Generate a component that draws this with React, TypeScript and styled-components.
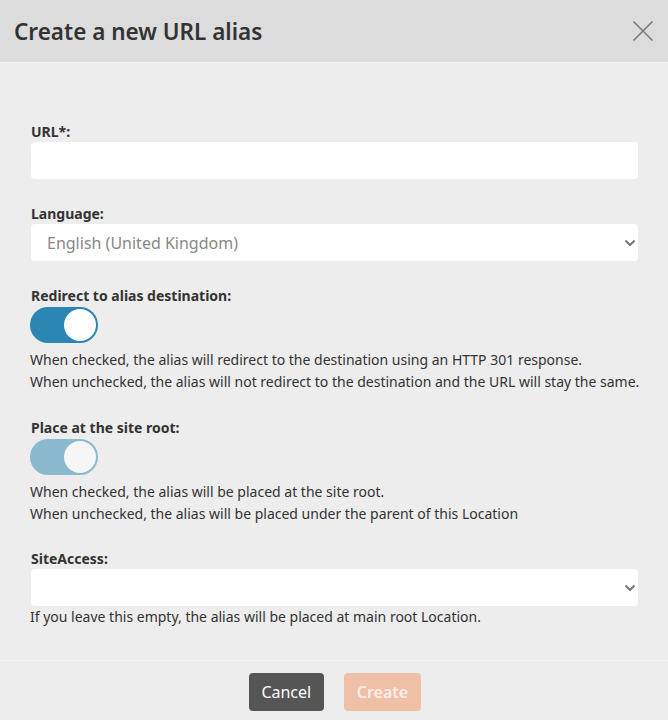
import React from 'react'
import styled, { createGlobalStyle } from 'styled-components'

const GlobalStyle = createGlobalStyle`
  html, body {
    margin: 0;
    padding: 0;
    background: #ededed;
  }
  body {
    font-family: 'Noto Sans', 'Open Sans', sans-serif;
    color: #333;
  }
`

const Modal = styled.div`
  width: 668px;
  height: 720px;
  display: flex;
  flex-direction: column;
  background: #ededed;
  overflow: hidden;
`

const Header = styled.div`
  height: 62px;
  flex-shrink: 0;
  display: flex;
  align-items: center;
  justify-content: space-between;
  padding: 0 14px;
  background: #dcdcdc;
  border-bottom: 1px solid #f2f2f2;
`

const Title = styled.h3`
  margin: 0;
  font-size: 22.5px;
  font-weight: 600;
  color: #333;
`

const CloseButton = styled.button`
  border: 0;
  background: none;
  padding: 0;
  width: 22px;
  height: 22px;
  display: flex;
  align-items: center;
  justify-content: center;
  cursor: pointer;
`

const Body = styled.div`
  flex: 1;
  padding: 59px 30px 0 30px;
`

const FieldGroup = styled.div<{ spacing?: number }>`
  margin-bottom: ${({ spacing }) => spacing ?? 25}px;
`

const Label = styled.label`
  display: block;
  font-size: 14px;
  line-height: 20px;
  font-weight: 700;
  color: #333;
  padding-left: 1px;
`

const TextInput = styled.input`
  box-sizing: border-box;
  display: block;
  width: 607px;
  height: 37px;
  margin-left: 1px;
  border: 0;
  border-radius: 4px;
  background: #fff;
  font-family: inherit;
  font-size: 16px;
  padding: 0 16px;
  outline: none;
`

const SelectWrap = styled.div`
  position: relative;
  width: 607px;
  margin-left: 1px;
`

const Select = styled.select`
  box-sizing: border-box;
  display: block;
  width: 100%;
  height: 37px;
  border: 0;
  border-radius: 4px;
  background: #fff;
  font-family: inherit;
  font-size: 16px;
  color: #888;
  padding: 0 30px 0 16px;
  appearance: none;
  outline: none;
`

const Chevron = styled.svg`
  position: absolute;
  right: 2px;
  top: 15px;
  pointer-events: none;
`

const Toggle = styled.div<{ on: boolean; disabled?: boolean }>`
  box-sizing: border-box;
  width: 68px;
  height: 36px;
  margin-top: 1px;
  border-radius: 18px;
  background: #2b86b3;
  padding: 2px;
  display: flex;
  justify-content: ${({ on }) => (on ? 'flex-end' : 'flex-start')};
  opacity: ${({ disabled }) => (disabled ? 0.5 : 1)};
`

const Knob = styled.span`
  width: 32px;
  height: 32px;
  border-radius: 50%;
  background: #fff;
`

const Help = styled.p`
  margin: 6px 0 0 0;
  font-size: 14px;
  line-height: 22px;
  color: #333;
  white-space: nowrap;
`

const HelpTight = styled(Help)`
  margin-top: 0;
`

const Footer = styled.div`
  height: 60px;
  flex-shrink: 0;
  border-top: 1px solid #f5f5f5;
  display: flex;
  justify-content: center;
  align-items: flex-start;
  gap: 20px;
  padding-top: 12px;
  padding-left: 2px;
  box-sizing: border-box;
`

const Button = styled.button<{ variant: 'secondary' | 'primary' }>`
  height: 38px;
  border: 0;
  border-radius: 4px;
  padding: 0 ${({ variant }) => (variant === 'primary' ? 13 : 12.5)}px;
  font-family: inherit;
  font-size: 16px;
  font-weight: ${({ variant }) => (variant === 'primary' ? 600 : 400)};
  background: ${({ variant }) => (variant === 'primary' ? '#f0bfa8' : '#555555')};
  color: ${({ variant }) => (variant === 'primary' ? '#fcefe9' : '#ffffff')};
`

const ChevronIcon = () => (
  <Chevron width="12" height="8" viewBox="0 0 12 8">
    <path d="M1.5 1.5 L6 6 L10.5 1.5" fill="none" stroke="#777" strokeWidth="2" />
  </Chevron>
)

export default function App() {
  return (
    <>
      <GlobalStyle />
      <Modal>
        <Header>
          <Title>Create a new URL alias</Title>
          <CloseButton aria-label="Close">
            <svg width="22" height="22" viewBox="0 0 22 22">
              <path d="M1.5 1.5 L20.5 20.5 M20.5 1.5 L1.5 20.5" stroke="#7a7a7a" strokeWidth="1.6" />
            </svg>
          </CloseButton>
        </Header>
        <Body>
          <FieldGroup>
            <Label>URL*:</Label>
            <TextInput type="text" />
          </FieldGroup>
          <FieldGroup>
            <Label>Language:</Label>
            <SelectWrap>
              <Select defaultValue="en-GB">
                <option value="en-GB">English (United Kingdom)</option>
              </Select>
              <ChevronIcon />
            </SelectWrap>
          </FieldGroup>
          <FieldGroup spacing={25}>
            <Label>Redirect to alias destination:</Label>
            <Toggle on>
              <Knob />
            </Toggle>
            <Help>
              When checked, the alias will redirect to the destination using an HTTP 301 response.
              <br />
              When unchecked, the alias will not redirect to the destination and the URL will stay the same.
            </Help>
          </FieldGroup>
          <FieldGroup spacing={24}>
            <Label>Place at the site root:</Label>
            <Toggle on disabled>
              <Knob />
            </Toggle>
            <Help>
              When checked, the alias will be placed at the site root.
              <br />
              When unchecked, the alias will be placed under the parent of this Location
            </Help>
          </FieldGroup>
          <FieldGroup spacing={0}>
            <Label>SiteAccess:</Label>
            <SelectWrap>
              <Select defaultValue="">
                <option value=""></option>
              </Select>
              <ChevronIcon />
            </SelectWrap>
            <HelpTight>If you leave this empty, the alias will be placed at main root Location.</HelpTight>
          </FieldGroup>
        </Body>
        <Footer>
          <Button variant="secondary">Cancel</Button>
          <Button variant="primary" disabled>
            Create
          </Button>
        </Footer>
      </Modal>
    </>
  )
}
